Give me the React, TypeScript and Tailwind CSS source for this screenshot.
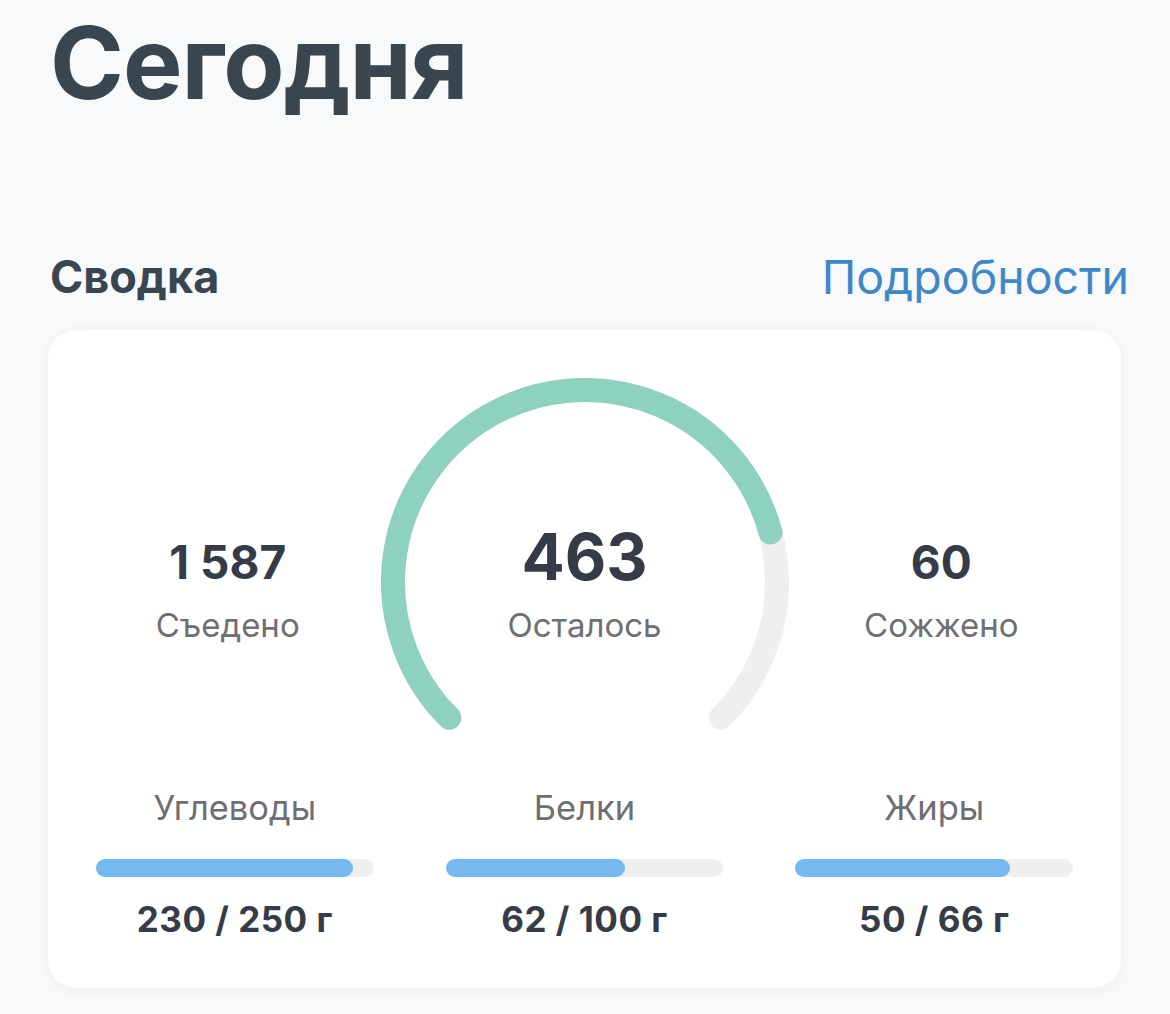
import React from 'react';

const macros = [
  { label: 'Углеводы', value: 230, goal: 250 },
  { label: 'Белки', value: 62, goal: 100 },
  { label: 'Жиры', value: 50, goal: 66 }
];

// gauge geometry (svg coords)
const R = 192;
const C = 204;
const pt = (deg: number) => {
  const a = (deg * Math.PI) / 180;
  return `${(C + R * Math.cos(a)).toFixed(2)} ${(C - R * Math.sin(a)).toFixed(2)}`;
};

const Gauge: React.FC<{ fraction: number }> = ({ fraction }) => {
  const endDeg = 225 - 270 * fraction;
  const large = 270 * fraction > 180 ? 1 : 0;
  return (
    <svg width="408" height="360" viewBox="0 0 408 360" className="block">
      <path
        d={`M ${pt(225)} A ${R} ${R} 0 1 1 ${pt(-45)}`}
        fill="none"
        stroke="#efefef"
        strokeWidth="24"
        strokeLinecap="round"
      />
      <path
        d={`M ${pt(225)} A ${R} ${R} 0 ${large} 1 ${pt(endDeg)}`}
        fill="none"
        stroke="#8ed1c1"
        strokeWidth="24"
        strokeLinecap="round"
      />
    </svg>
  );
};

const Stat: React.FC<{ value: string; label: string }> = ({ value, label }) => (
  <div className="flex flex-col items-center pt-[157px]">
    <span className="text-[46px] leading-[54px] font-bold text-[#353b47]">{value}</span>
    <span className="mt-[16px] text-[33px] leading-[40px] text-[#6e6e73]">{label}</span>
  </div>
);

export default function App() {
  return (
    <div
      className="min-h-[1014px] bg-[#f7f9fb] px-[48px] pt-[13px]"
      style={{ fontFamily: 'Inter, "Noto Sans", sans-serif' }}
    >
      <h1 className="pl-[2px] text-[100px] leading-[100px] font-bold tracking-[-1px] text-[#3a464f]">Сегодня</h1>

      <div className="mt-[138px] -mr-[7px] flex items-center justify-between pl-[2px]">
        <h2 className="text-[45px] leading-[52px] font-bold text-[#3a464f]">Сводка</h2>
        <a className="text-[46.5px] leading-[52px] text-[#3f88c8]">Подробности</a>
      </div>

      <div className="mt-[27px] w-[1073px] rounded-[28px] bg-white px-[48px] pt-[48px] pb-[49px] shadow-[0_2px_14px_rgba(0,0,0,0.05)]">
        <div className="grid grid-cols-[1fr_408px_1fr] gap-x-[21px]">
          <Stat value="1 587" label="Съедено" />
          <div className="relative">
            <Gauge fraction={0.778} />
            <div className="absolute left-0 right-0 top-[147px] flex flex-col items-center">
              <span className="text-[64px] leading-[64px] font-bold text-[#353b47]">463</span>
              <span className="mt-[16px] text-[33px] leading-[40px] text-[#6e6e73]">Осталось</span>
            </div>
          </div>
          <Stat value="60" label="Сожжено" />
        </div>

        <div className="mt-[50px] grid grid-cols-3 gap-x-[72px]">
          {macros.map((m) => (
            <div key={m.label} className="flex flex-col items-center">
              <span className="text-[34.5px] leading-[40px] text-[#6e6e73]">{m.label}</span>
              <div className="mt-[31px] h-[18px] w-full rounded-full bg-[#efefef]">
                <div
                  className="h-full rounded-full bg-[#74b9ef]"
                  style={{ width: `calc(${(m.value / m.goal).toFixed(4)} * (100% - 18px) + 18px)` }}
                />
              </div>
              <span className="mt-[22px] text-[35px] leading-[40px] font-bold tracking-[0.5px] text-[#353b47]">
                {m.value} / {m.goal} г
              </span>
            </div>
          ))}
        </div>
      </div>
    </div>
  );
}
